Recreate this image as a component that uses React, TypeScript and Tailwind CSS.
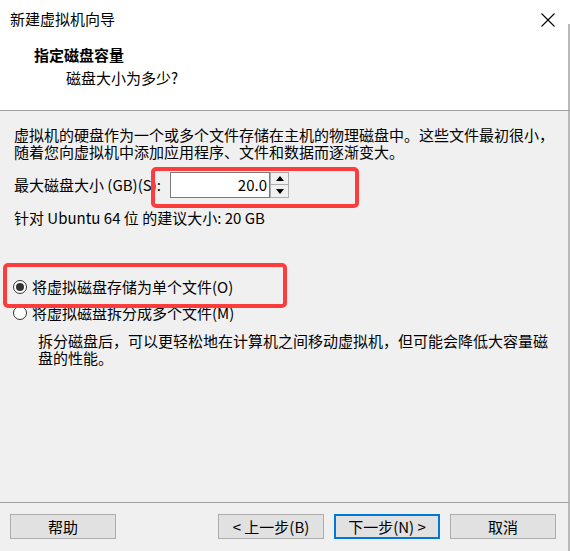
function Radio({ checked }: { checked?: boolean }) {
  return (
    <span className="w-[14px] h-[14px] rounded-full border border-[#333] bg-white flex items-center justify-center shrink-0">
      {checked && <span className="w-[8px] h-[8px] rounded-full bg-[#333]" />}
    </span>
  );
}

function Btn({ label, primary }: { label: string; primary?: boolean }) {
  return (
    <button
      className={
        primary
          ? "w-[106px] h-[25px] bg-[#e1e1e1] border-2 border-[#0078d7] text-[15px] leading-[20px] text-black"
          : "w-[106px] h-[25px] bg-[#e1e1e1] border border-[#adadad] text-[15px] leading-[20px] text-black"
      }
    >
      {label}
    </button>
  );
}

export default function App() {
  return (
    <div className="w-[570px] h-[551px] flex flex-col bg-[#f0f0f0] text-black font-['Noto_Sans_CJK_SC',sans-serif] relative overflow-hidden">
      {/* title + header (white) */}
      <div className="bg-white h-[111px] border-b border-[#a0a0a0] relative">
        <div className="flex items-center justify-between h-[38px] pl-[10px] pr-[15px]">
          <span className="text-[15px] leading-[20px]">新建虚拟机向导</span>
          <svg width="14" height="14" viewBox="0 0 14 14" className="mt-[1px]">
            <path d="M0.5 0.5 L13.5 13.5 M13.5 0.5 L0.5 13.5" stroke="#000" strokeWidth="1.1" />
          </svg>
        </div>
        <div className="pl-[34px] pt-[7px] text-[15px] leading-[20px] font-bold">指定磁盘容量</div>
        <div className="pl-[66px] pt-[3px] text-[15px] leading-[20px]">磁盘大小为多少?</div>
        <div className="absolute right-0 top-[24px] bottom-0 w-[2px] bg-[#b9b9b9]" />
      </div>

      {/* body */}
      <div className="flex-1 pl-[14px] pt-[15px] text-[15px] border-r-2 border-[#b9b9b9]">
        <p className="leading-[17px]">
          虚拟机的硬盘作为一个或多个文件存储在主机的物理磁盘中。这些文件最初很小，
          <br />
          随着您向虚拟机中添加应用程序、文件和数据而逐渐变大。
        </p>

        <div className="flex items-center h-[26px] mt-[12px]">
          <span className="w-[156px] leading-[18px]">最大磁盘大小 (GB)(S):</span>
          <div className="flex">
            <div className="w-[100px] h-[26px] bg-white border border-[#7a7a7a] flex items-center justify-end pr-[2px] leading-[18px]">
              20.0
            </div>
            <div className="flex flex-col w-[19px] h-[26px]">
              <div className="h-[13px] border border-[#adadad] bg-[#f0f0f0] flex items-center justify-center">
                <svg width="8" height="5" viewBox="0 0 8 5">
                  <path d="M0 5 L4 0 L8 5 Z" fill="#000" />
                </svg>
              </div>
              <div className="h-[13px] border border-t-0 border-[#adadad] bg-[#f0f0f0] flex items-center justify-center">
                <svg width="8" height="5" viewBox="0 0 8 5">
                  <path d="M0 0 L8 0 L4 5 Z" fill="#000" />
                </svg>
              </div>
            </div>
          </div>
        </div>

        <div className="mt-[11px] leading-[18px]">针对 Ubuntu 64 位 的建议大小: 20 GB</div>

        <div className="mt-[51px] flex items-center h-[18px] gap-[5px] -ml-[1px]">
          <Radio checked />
          <span className="leading-[18px]">将虚拟磁盘存储为单个文件(O)</span>
        </div>
        <div className="mt-[8px] flex items-center h-[18px] gap-[5px] -ml-[1px]">
          <Radio />
          <span className="leading-[18px]">将虚拟磁盘拆分成多个文件(M)</span>
        </div>
        <p className="mt-[10px] pl-[24px] leading-[17px]">
          拆分磁盘后，可以更轻松地在计算机之间移动虚拟机，但可能会降低大容量磁
          <br />
          盘的性能。
        </p>
      </div>

      {/* footer */}
      <div className="h-[49px] border-t border-[#a0a0a0] flex items-start justify-between pl-[10px] pr-[12px] pt-[11px] border-r-2 border-r-[#b9b9b9]">
        <Btn label="帮助" />
        <div className="flex gap-[10px]">
          <Btn label="< 上一步(B)" />
          <Btn label="下一步(N) >" primary />
          <Btn label="取消" />
        </div>
      </div>

      {/* red annotation boxes */}
      <div className="absolute left-[151px] top-[167px] w-[208px] h-[41px] border-4 border-[#ff3c3c] rounded-[5px]" />
      <div className="absolute left-[3px] top-[263px] w-[284px] h-[45px] border-4 border-[#ff3c3c] rounded-[5px]" />
    </div>
  );
}
